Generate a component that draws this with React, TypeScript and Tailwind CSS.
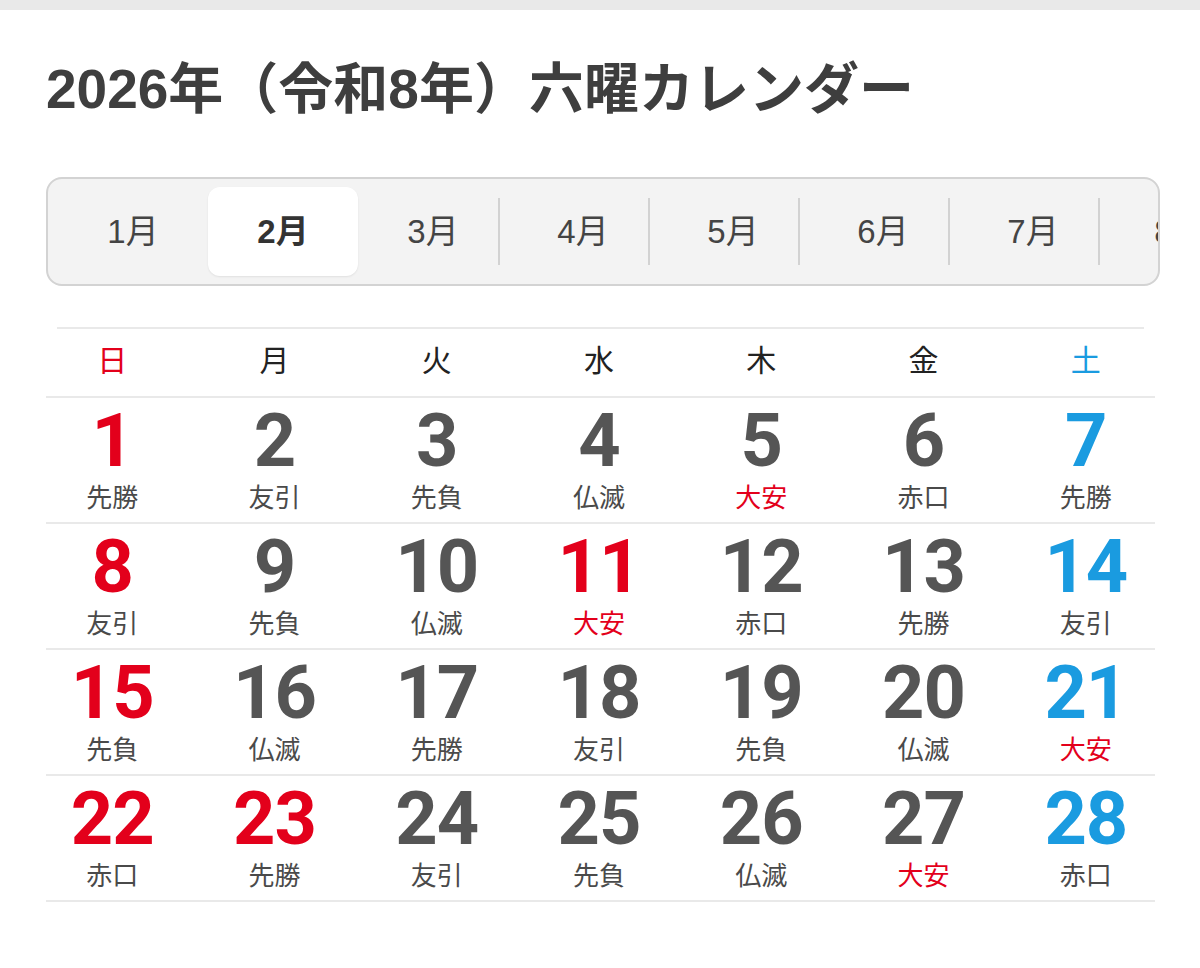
import React from 'react'

const months = ['1月', '2月', '3月', '4月', '5月', '6月', '7月', '8月', '9月', '10月', '11月', '12月']
const weekdays = ['日', '月', '火', '水', '木', '金', '土']

const rokuyo = [
  '先勝', '友引', '先負', '仏滅', '大安', '赤口', '先勝',
  '友引', '先負', '仏滅', '大安', '赤口', '先勝', '友引',
  '先負', '仏滅', '先勝', '友引', '先負', '仏滅', '大安',
  '赤口', '先勝', '友引', '先負', '仏滅', '大安', '赤口',
]

// national holidays in Feb 2026
const holidays = [11, 23]

const jp = { fontFamily: '"Noto Sans CJK JP", sans-serif' }
const latin = { fontFamily: '"Liberation Sans", "Noto Sans CJK JP", sans-serif' }
const num = { fontFamily: 'Roboto, "Liberation Sans", sans-serif' }

function MonthTabs() {
  const active = 1
  return (
    <div className="ml-[46px] w-[1114px] h-[109px] border-2 border-[#d3d3d3] rounded-[16px] bg-[#f3f3f3] overflow-hidden">
      <div className="flex pt-[8px] pl-[10px]">
        {months.map((m, i) => {
          const showDivider = i > active && i < months.length - 1
          return (
            <div
              key={m}
              className={
                'relative shrink-0 w-[150px] h-[89px] flex items-center justify-center text-[33px] ' +
                (i === active
                  ? 'bg-white rounded-[12px] font-bold text-[#333] shadow-[0_1px_2px_rgba(0,0,0,0.08)]'
                  : 'text-[#444]') +
                (i === 7 ? ' -ml-[3px]' : '') +
                (showDivider
                  ? ' after:absolute after:right-[8px] after:top-[11px] after:bottom-[11px] after:w-[2px] after:bg-[#d2d2d2]'
                  : '')
              }
              style={latin}
            >
              {m}
            </div>
          )
        })}
      </div>
    </div>
  )
}

function Calendar() {
  const rows = [0, 1, 2, 3]
  return (
    <div className="ml-[46px] w-[1109px] mt-[41px]">
      <div className="mx-[11px] border-t-2 border-[#e9e9e9]" />
      <div className="border-b-2 border-[#e9e9e9]">
        <div className="-ml-[15px] w-[1136px] grid grid-cols-7 h-[67px] items-center pb-[9px]">
          {weekdays.map((w, i) => (
            <div
              key={w}
              className={
                'text-center text-[30px] leading-[40px] ' +
                (i === 0 ? 'text-[#e3001b]' : i === 6 ? 'text-[#1a9be0]' : 'text-[#222]')
              }
              style={jp}
            >
              {w}
            </div>
          ))}
        </div>
      </div>
      {rows.map((r) => (
        <div key={r} className="border-b-2 border-[#e9e9e9]">
          <div className="-ml-[15px] w-[1136px] grid grid-cols-7 h-[124px]">
            {weekdays.map((_, c) => {
              const day = r * 7 + c + 1
              const ro = rokuyo[day - 1]
              const red = c === 0 || holidays.includes(day)
              const blue = c === 6
              return (
                <div key={c} className="flex flex-col items-center pt-[12px]">
                  <div
                    className={
                      'h-[62px] leading-[62px] text-[74px] font-bold tracking-[-1px] ' +
                      (red ? 'text-[#e3001b]' : blue ? 'text-[#1a9be0]' : 'text-[#555]')
                    }
                    style={num}
                  >
                    {day}
                  </div>
                  <div
                    className={
                      'mt-[9px] leading-[30px] text-[26px] ' +
                      (ro === '大安' ? 'text-[#e3001b]' : 'text-[#4a4a4a]')
                    }
                    style={jp}
                  >
                    {ro}
                  </div>
                </div>
              )
            })}
          </div>
        </div>
      ))}
    </div>
  )
}

export default function App() {
  return (
    <div className="w-[1200px] h-[968px] bg-white overflow-hidden">
      <div className="h-[10px] bg-[#e9e9e9]" />
      <h1
        className="mt-[46px] ml-[46px] h-[66px] leading-[66px] text-[55px] font-bold text-[#3e3e3e] whitespace-nowrap"
        style={latin}
      >
        2026年（令和8年）六曜カレンダー
      </h1>
      <div className="mt-[55px]">
        <MonthTabs />
      </div>
      <Calendar />
    </div>
  )
}
